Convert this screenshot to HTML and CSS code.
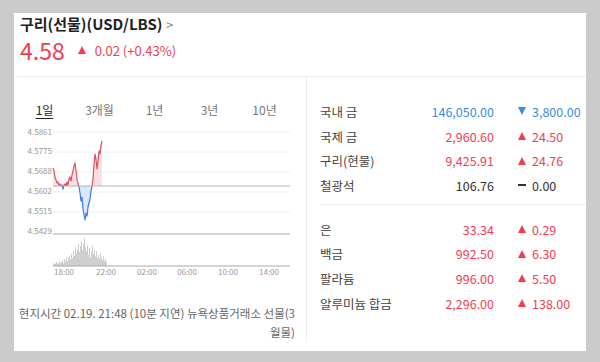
FILE: index.html
```html
<!DOCTYPE html>
<html>

<head>
  <title>구리(선물)</title>
  <link rel="stylesheet" href="styles.css">
</head>

<body>
  <div class="card">
    <div class="card-head">
      <div class="title">구리(선물)(USD/LBS) <span class="chev">&gt;</span></div>
      <div class="price">
        <span class="now">4.58</span>
        <span class="tri-up"></span>
        <span class="diff">0.02 (+0.43%)</span>
      </div>
    </div>

    <div class="card-body">
      <div class="chart-col">
        <div class="tabs">
          <span class="tab active">1일</span>
          <span class="tab">3개월</span>
          <span class="tab">1년</span>
          <span class="tab">3년</span>
          <span class="tab">10년</span>
        </div>

        <svg class="chart" width="292" height="160" viewBox="14 120 292 160">
          <defs>
            <clipPath id="above"><rect x="14" y="120" width="292" height="65"></rect></clipPath>
            <clipPath id="below"><rect x="14" y="185" width="292" height="60"></rect></clipPath>
          </defs>
          <g class="grid">
            <line x1="53" y1="131" x2="290" y2="131"></line>
            <line x1="53" y1="151" x2="290" y2="151"></line>
            <line x1="53" y1="171" x2="290" y2="171"></line>
            <line x1="53" y1="191" x2="290" y2="191"></line>
            <line x1="53" y1="211" x2="290" y2="211"></line>
          </g>
          <g class="ylab">
            <text x="52" y="131.5">4.5861</text>
            <text x="52" y="150.5">4.5775</text>
            <text x="52" y="170.5">4.5688</text>
            <text x="52" y="190.5">4.5602</text>
            <text x="52" y="210.5">4.5515</text>
            <text x="52" y="230.5">4.5429</text>
          </g>

          <path class="area-up" clip-path="url(#above)" d="M53 185 L53 167 L54 170 L55 176 L56 179 L57 182 L58 181 L59 184 L60 183 L61 185 L62 184 L63 188 L64 184 L65 183 L66 185 L67 181 L68 184 L69 178 L70 176 L71 180 L72 174 L73 170 L74 165 L75 162 L76 170 L77 178 L78 183 L79 186 L80 192 L81 200 L82 196 L83 208 L84 214 L85 219 L86 212 L87 215 L88 206 L89 202 L90 198 L91 190 L92 186 L93 178 L94 164 L95 153 L96 158 L97 168 L98 160 L99 150 L100 153 L101 144 L102 140 L102 185 Z"></path>
          <path class="area-down" clip-path="url(#below)" d="M53 185 L53 167 L54 170 L55 176 L56 179 L57 182 L58 181 L59 184 L60 183 L61 185 L62 184 L63 188 L64 184 L65 183 L66 185 L67 181 L68 184 L69 178 L70 176 L71 180 L72 174 L73 170 L74 165 L75 162 L76 170 L77 178 L78 183 L79 186 L80 192 L81 200 L82 196 L83 208 L84 214 L85 219 L86 212 L87 215 L88 206 L89 202 L90 198 L91 190 L92 186 L93 178 L94 164 L95 153 L96 158 L97 168 L98 160 L99 150 L100 153 L101 144 L102 140 L102 185 Z"></path>
          <path class="line-up" clip-path="url(#above)" d="M53 167 L54 170 L55 176 L56 179 L57 182 L58 181 L59 184 L60 183 L61 185 L62 184 L63 188 L64 184 L65 183 L66 185 L67 181 L68 184 L69 178 L70 176 L71 180 L72 174 L73 170 L74 165 L75 162 L76 170 L77 178 L78 183 L79 186 L80 192 L81 200 L82 196 L83 208 L84 214 L85 219 L86 212 L87 215 L88 206 L89 202 L90 198 L91 190 L92 186 L93 178 L94 164 L95 153 L96 158 L97 168 L98 160 L99 150 L100 153 L101 144 L102 140"></path>
          <path class="line-down" clip-path="url(#below)" d="M53 167 L54 170 L55 176 L56 179 L57 182 L58 181 L59 184 L60 183 L61 185 L62 184 L63 188 L64 184 L65 183 L66 185 L67 181 L68 184 L69 178 L70 176 L71 180 L72 174 L73 170 L74 165 L75 162 L76 170 L77 178 L78 183 L79 186 L80 192 L81 200 L82 196 L83 208 L84 214 L85 219 L86 212 L87 215 L88 206 L89 202 L90 198 L91 190 L92 186 L93 178 L94 164 L95 153 L96 158 L97 168 L98 160 L99 150 L100 153 L101 144 L102 140"></path>

          <line class="prev" x1="53" y1="185" x2="290" y2="185"></line>
          <line class="axis" x1="53" y1="233" x2="290" y2="233"></line>

          <path class="vol" d="M53.5 265V263 M54.5 265V262 M55.5 265V263 M56.5 265V261 M57.5 265V262 M58.5 265V263 M59.5 265V260 M60.5 265V262 M61.5 265V261 M62.5 265V259 M63.5 265V262 M64.5 265V258 M65.5 265V261 M66.5 265V256 M67.5 265V260 M68.5 265V257 M69.5 265V255 M70.5 265V259 M71.5 265V253 M72.5 265V257 M73.5 265V250 M74.5 265V255 M75.5 265V246 M76.5 265V252 M77.5 265V248 M78.5 265V243 M79.5 265V251 M80.5 265V245 M81.5 265V240 M82.5 265V249 M83.5 265V243 M84.5 265V237 M85.5 265V246 M86.5 265V250 M87.5 265V244 M88.5 265V254 M89.5 265V247 M90.5 265V256 M91.5 265V251 M92.5 265V245 M93.5 265V253 M94.5 265V249 M95.5 265V255 M96.5 265V250 M97.5 265V257 M98.5 265V254 M99.5 265V258 M100.5 265V252 M101.5 265V256 M102.5 265V259 M103.5 265V255 M104.5 265V260 M105.5 265V258 M106.5 265V261"></path>
          <line class="axis" x1="53" y1="265" x2="290" y2="265"></line>

          <g class="xlab">
            <text x="64" y="272">18:00</text>
            <text x="106" y="272">22:00</text>
            <text x="147" y="272">02:00</text>
            <text x="187" y="272">06:00</text>
            <text x="228" y="272">10:00</text>
            <text x="269" y="272">14:00</text>
          </g>
        </svg>

        <p class="note">현지시간 02.19. 21:48 (10분 지연) 뉴욕상품거래소 선물(3월물)</p>
      </div>

      <div class="list-col">
        <div class="group">
          <div class="row">
            <span class="name">국내 금</span>
            <span class="val down">146,050.00</span>
            <span class="chg down"><i class="tri-down"></i>3,800.00</span>
          </div>
          <div class="row">
            <span class="name">국제 금</span>
            <span class="val up">2,960.60</span>
            <span class="chg up"><i class="tri-up"></i>24.50</span>
          </div>
          <div class="row">
            <span class="name">구리(현물)</span>
            <span class="val up">9,425.91</span>
            <span class="chg up"><i class="tri-up"></i>24.76</span>
          </div>
          <div class="row">
            <span class="name">철광석</span>
            <span class="val">106.76</span>
            <span class="chg"><i class="dash"></i>0.00</span>
          </div>
        </div>
        <div class="group second">
          <div class="row">
            <span class="name">은</span>
            <span class="val up">33.34</span>
            <span class="chg up"><i class="tri-up"></i>0.29</span>
          </div>
          <div class="row">
            <span class="name">백금</span>
            <span class="val up">992.50</span>
            <span class="chg up"><i class="tri-up"></i>6.30</span>
          </div>
          <div class="row">
            <span class="name">팔라듐</span>
            <span class="val up">996.00</span>
            <span class="chg up"><i class="tri-up"></i>5.50</span>
          </div>
          <div class="row">
            <span class="name">알루미늄 합금</span>
            <span class="val up">2,296.00</span>
            <span class="chg up"><i class="tri-up"></i>138.00</span>
          </div>
        </div>
      </div>
    </div>
  </div>
</body>

</html>
```

FILE: styles.css
```css
body {
margin: 0;
padding: 13px 0 0 14px;
background-color: #cbcbcb;
font-family: "Noto Sans CJK KR", "Noto Sans", sans-serif;
color: #333;
}

.card {
width: 572px;
height: 338px;
background-color: #fff;
overflow: hidden;
}

.card-head {
padding: 0 0 12px 6px;
border-bottom: 1px solid #ededed;
margin-left: 3px;
}

.card-head .title {
font-size: 15px;
font-weight: bold;
line-height: 22px;
color: #222;
margin-left: -3px;
}

.title .chev {
font-weight: normal;
color: #888;
font-size: 13px;
}

.price {
display: flex;
align-items: center;
height: 28px;
margin-left: -3px;
color: #f23d4f;
}

.price .now {
font-size: 23px;
margin-right: 13px;
}

.price .diff {
font-size: 13px;
margin-left: 9px;
}

.tri-up,
.tri-down {
display: inline-block;
width: 0;
height: 0;
border-left: 4.5px solid transparent;
border-right: 4.5px solid transparent;
}

.tri-up {
border-bottom: 8px solid #f23d4f;
}

.tri-down {
border-top: 8px solid #3a8ae6;
}

.dash {
display: inline-block;
width: 8px;
height: 2px;
background-color: #333;
}

.card-body {
display: flex;
}

.chart-col {
width: 292px;
}

.tabs {
display: flex;
width: 275px;
margin: 24px 0 0 3px;
line-height: 18px;
font-size: 12px;
color: #777;
}

.tab {
flex: 1;
text-align: center;
}

.tab.active {
color: #222;
text-decoration: underline;
text-underline-offset: 3px;
}

.chart {
display: block;
margin-top: 2px;
}

.grid line {
stroke: #f0f0f0;
stroke-width: 1;
}

.ylab text,
.xlab text {
font-size: 8px;
fill: #999;
dominant-baseline: middle;
}

.ylab text {
text-anchor: end;
}

.xlab text {
text-anchor: middle;
}

.area-up {
fill: #fcdfe2;
}

.area-down {
fill: #dbe7fb;
}

.line-up,
.line-down {
fill: none;
stroke-width: 1.2;
stroke-linejoin: round;
}

.line-up {
stroke: #e0505e;
}

.line-down {
stroke: #3a7ee6;
}

.prev {
stroke: #b5b5b5;
stroke-width: 1;
}

.axis {
stroke: #aaa;
stroke-width: 1.2;
}

.vol {
stroke: #cfcfcf;
stroke-width: 1;
}

.note {
margin: 23px 0 0 0;
padding: 0 11px 0 4px;
text-align: right;
font-size: 11.5px;
line-height: 19px;
color: #666;
word-break: break-all;
}

.list-col {
flex: 1;
border-left: 1px solid #eee;
padding: 22px 0 0 13px;
}

.group {
padding-bottom: 6px;
}

.group.second {
border-top: 1px solid #eee;
padding-top: 12px;
}

.row {
display: grid;
grid-template-columns: 100px 74px auto;
height: 24.7px;
align-items: center;
font-size: 12.5px;
}

.row .name {
color: #444;
}

.row .val {
text-align: right;
}

.row .chg {
display: flex;
align-items: center;
gap: 6px;
padding-left: 24px;
}

.up {
color: #f23d4f;
}

.down {
color: #3a8ae6;
}
```
